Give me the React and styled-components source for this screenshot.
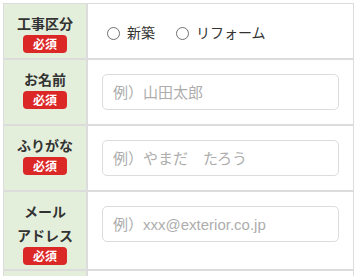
import React from 'react';
import styled, { createGlobalStyle } from 'styled-components';

const GlobalStyle = createGlobalStyle`
  body {
    margin: 0;
    background: #fff;
    font-family: "Liberation Sans", "Noto Sans CJK JP", sans-serif;
  }
`;

const Page = styled.div`
  padding: 3px 0 0 3px;
`;

const Table = styled.div`
  width: 349px;
  border: 1px solid #dcdcdc;
  border-bottom: none;
`;

const Row = styled.div`
  display: grid;
  grid-template-columns: 82px 1fr;
  column-gap: 2px;
  background: #dcdcdc;
  border-bottom: 2px solid #dcdcdc;
`;

const Label = styled.div`
  background: #e4efdb;
  display: flex;
  flex-direction: column;
  align-items: center;
  padding: 7px 0 4px;
`;

const LabelText = styled.div`
  font-family: "Noto Sans CJK JP", sans-serif;
  font-weight: 700;
  font-size: 14px;
  line-height: 24px;
  color: #333;
  text-align: center;
`;

const Required = styled.span`
  display: inline-flex;
  align-items: center;
  justify-content: center;
  width: 44px;
  height: 18px;
  border-radius: 4px;
  background: #dc2727;
  color: #fff;
  font-family: "Noto Sans CJK JP", sans-serif;
  font-weight: 700;
  font-size: 12px;
  line-height: 1;
`;

const Value = styled.div`
  background: #fff;
  padding: 14px 14px;
`;

const RadioGroup = styled.div`
  display: flex;
  align-items: center;
  gap: 21px;
  padding: 2px 0 0 5px;
  height: 24px;
`;

const RadioLabel = styled.label`
  display: flex;
  align-items: center;
  gap: 7px;
  font-family: "Noto Sans CJK JP", sans-serif;
  font-size: 14px;
  color: #333;
`;

const Circle = styled.span`
  width: 11px;
  height: 11px;
  border: 1px solid #6f6f6f;
  border-radius: 50%;
  background: #fff;
  margin-top: 2px;
`;

const Input = styled.input`
  box-sizing: border-box;
  display: block;
  width: 100%;
  height: 36px;
  border: 1px solid #dcdcdc;
  border-radius: 5px;
  padding: 0 10px;
  font-family: "Liberation Sans", "Noto Sans CJK JP", sans-serif;
  font-size: 15px;
  color: #333;
  outline: none;

  &::placeholder {
    color: #adadad;
  }
`;

const fields = [
  { label: ['お名前'], placeholder: '例）山田太郎' },
  { label: ['ふりがな'], placeholder: '例）やまだ　たろう' },
  { label: ['メール', 'アドレス'], placeholder: '例）xxx@exterior.co.jp' },
];

const App = () => (
  <Page>
    <GlobalStyle />
    <Table>
      <Row>
        <Label>
          <LabelText>工事区分</LabelText>
          <Required>必須</Required>
        </Label>
        <Value>
          <RadioGroup>
            <RadioLabel>
              <Circle />
              新築
            </RadioLabel>
            <RadioLabel>
              <Circle />
              リフォーム
            </RadioLabel>
          </RadioGroup>
        </Value>
      </Row>
      {fields.map((f) => (
        <Row key={f.placeholder}>
          <Label>
            {f.label.map((l) => (
              <LabelText key={l}>{l}</LabelText>
            ))}
            <Required>必須</Required>
          </Label>
          <Value>
            <Input placeholder={f.placeholder} />
          </Value>
        </Row>
      ))}
      <Row>
        <Label />
        <Value />
      </Row>
    </Table>
  </Page>
);

export default App;
